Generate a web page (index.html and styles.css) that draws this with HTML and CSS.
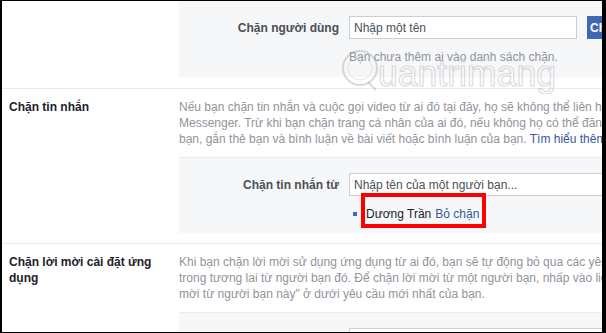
FILE: index.html
```html
<!DOCTYPE html>
<html lang="vi">
<head>
<meta charset="utf-8">
<title>Chặn</title>
<link rel="stylesheet" href="styles.css">
</head>
<body>
<div class="frame">
  <div class="page">
    <section class="row row-first">
      <div class="row-label"></div>
      <div class="row-content">
        <div class="panel panel-first">
          <div class="field">
            <label class="field-label">Chặn người dùng</label>
            <div class="field-controls">
              <input class="text-input input-short" type="text" placeholder="Nhập một tên">
              <button class="btn" type="button">Chặn</button>
            </div>
            <div class="field-note">Bạn chưa thêm ai vào danh sách chặn.</div>
          </div>
        </div>
      </div>
    </section>

    <section class="row">
      <div class="row-label">Chặn tin nhắn</div>
      <div class="row-content">
        <p class="desc">Nếu bạn chặn tin nhắn và cuộc gọi video từ ai đó tại đây, họ sẽ không thể liên hệ với bạn trong ứng dụng<br>Messenger. Trừ khi bạn chặn trang cá nhân của ai đó, nếu không họ có thể đăng bài lên dòng thời gian của<br>bạn, gắn thẻ bạn và bình luận về bài viết hoặc bình luận của bạn. <a class="link" href="#">Tìm hiểu thêm</a></p>
        <div class="panel">
          <div class="field">
            <label class="field-label">Chặn tin nhắn từ</label>
            <div class="field-controls">
              <input class="text-input input-long" type="text" placeholder="Nhập tên của một người bạn...">
            </div>
            <ul class="blocked-list">
              <li class="blocked-item"><span class="bullet"></span><span class="blocked-name">Dương Trần</span> <a class="link" href="#">Bỏ chặn</a></li>
            </ul>
          </div>
        </div>
      </div>
    </section>

    <section class="row">
      <div class="row-label">Chặn lời mời cài đặt ứng dụng</div>
      <div class="row-content">
        <p class="desc">Khi bạn chặn lời mời sử dụng ứng dụng từ ai đó, bạn sẽ tự động bỏ qua các yêu cầu ứng dụng<br>trong tương lai từ người bạn đó. Để chặn lời mời từ một người bạn, nhấp vào liên kết "Bỏ qua tất cả lời<br>mời từ người bạn này" ở dưới yêu cầu mới nhất của bạn.</p>
        <div class="panel">
          <div class="field">
            <label class="field-label">Chặn lời mời từ</label>
            <div class="field-controls">
              <input class="text-input input-long" type="text" placeholder="Nhập tên của một người bạn...">
            </div>
          </div>
        </div>
      </div>
    </section>

    <div class="annotation"></div>
    <svg class="watermark" width="230" height="50" viewBox="0 0 230 50" aria-hidden="true">
      <circle cx="22" cy="24" r="17" fill="none" stroke="rgba(150,150,150,0.35)" stroke-width="2"/>
      <circle cx="22" cy="24" r="12" fill="none" stroke="rgba(150,150,150,0.25)" stroke-width="1"/>
      <path d="M30 38 L38 46" stroke="rgba(150,150,150,0.35)" stroke-width="2" fill="none"/>
      <text x="40" y="42" textLength="178" lengthAdjust="spacingAndGlyphs" font-family="Liberation Sans, Arial, sans-serif" font-size="36" fill="rgba(255,255,255,0.35)" stroke="rgba(150,150,150,0.35)" stroke-width="1.2">uantrimang</text>
    </svg>
  </div>
</div>
</body>
</html>
```

FILE: styles.css
```css
html, body {
  margin: 0;
  padding: 0;
  background: #000;
}

.frame {
  width: 606px;
  height: 333px;
  box-sizing: border-box;
  padding: 1px 4px 1px 2px;
  background: #000;
}

.page {
  position: relative;
  width: 600px;
  height: 331px;
  background: #fff;
  overflow: hidden;
  font-family: "Liberation Sans", Arial, Helvetica, sans-serif;
  font-size: 12px;
  line-height: 16px;
  color: #1d2129;
}

.row {
  display: flex;
  padding: 10px 0 10px 0;
  border-bottom: 1px solid #e9ebee;
}

.row-first {
  padding-top: 0;
  padding-bottom: 11px;
}

.row-label {
  flex: 0 0 170px;
  padding-left: 7px;
  padding-right: 10px;
  box-sizing: border-box;
  width: 177px;
  flex-basis: 177px;
  font-weight: bold;
  color: #1d2129;
  padding-right: 14px;
}

.row-content {
  flex: 0 0 520px;
  width: 520px;
}

.desc {
  margin: 0 0 10px 0;
  color: #90949c;
  white-space: nowrap;
}

.link {
  color: #365899;
  text-decoration: none;
}

.panel {
  background: #f6f7f9;
  border-top: 1px solid #e9ebee;
  padding: 15px 0 11px 0;
}

.panel-first {
  margin-top: -1px;
  padding-bottom: 12px;
}

.field {
  display: grid;
  grid-template-columns: 160px 1fr;
  column-gap: 10px;
  row-gap: 10px;
  align-items: center;
}

.field-label {
  text-align: right;
  font-weight: bold;
  color: #4b4f56;
}

.field-controls {
  display: flex;
  gap: 10px;
  align-items: center;
}

.text-input {
  box-sizing: border-box;
  height: 23px;
  margin: 0;
  padding: 0 4px;
  border: 1px solid #ccd0d5;
  background: #fff;
  font-family: "Liberation Sans", Arial, Helvetica, sans-serif;
  font-size: 12px;
  color: #1d2129;
  outline: none;
}

.text-input::placeholder {
  color: #4b4f56;
  opacity: 1;
}

.input-short {
  width: 228px;
}

.input-long {
  width: 300px;
}

.btn {
  box-sizing: border-box;
  height: 23px;
  margin: 0;
  padding: 0 8px 0 2px;
  border: 1px solid #4267b2;
  background: #4267b2;
  color: #fff;
  font-family: "Liberation Sans", Arial, Helvetica, sans-serif;
  font-size: 12px;
  font-weight: bold;
}

.field-note {
  grid-column: 2;
  color: #90949c;
}

.blocked-list {
  grid-column: 2;
  list-style: none;
  margin: 0;
  padding: 0;
}

.blocked-item {
  display: flex;
  align-items: center;
}

.bullet {
  width: 4px;
  height: 4px;
  background: #4267b2;
  margin-left: 4px;
  margin-right: 9px;
  flex: 0 0 4px;
}

.blocked-name {
  color: #1d2129;
  margin-right: 4px;
}

.annotation {
  position: absolute;
  left: 359px;
  top: 192px;
  width: 125px;
  height: 35px;
  box-sizing: border-box;
  border: 4px solid #ff0000;
}

.watermark {
  position: absolute;
  left: 336px;
  top: 43px;
}
```
